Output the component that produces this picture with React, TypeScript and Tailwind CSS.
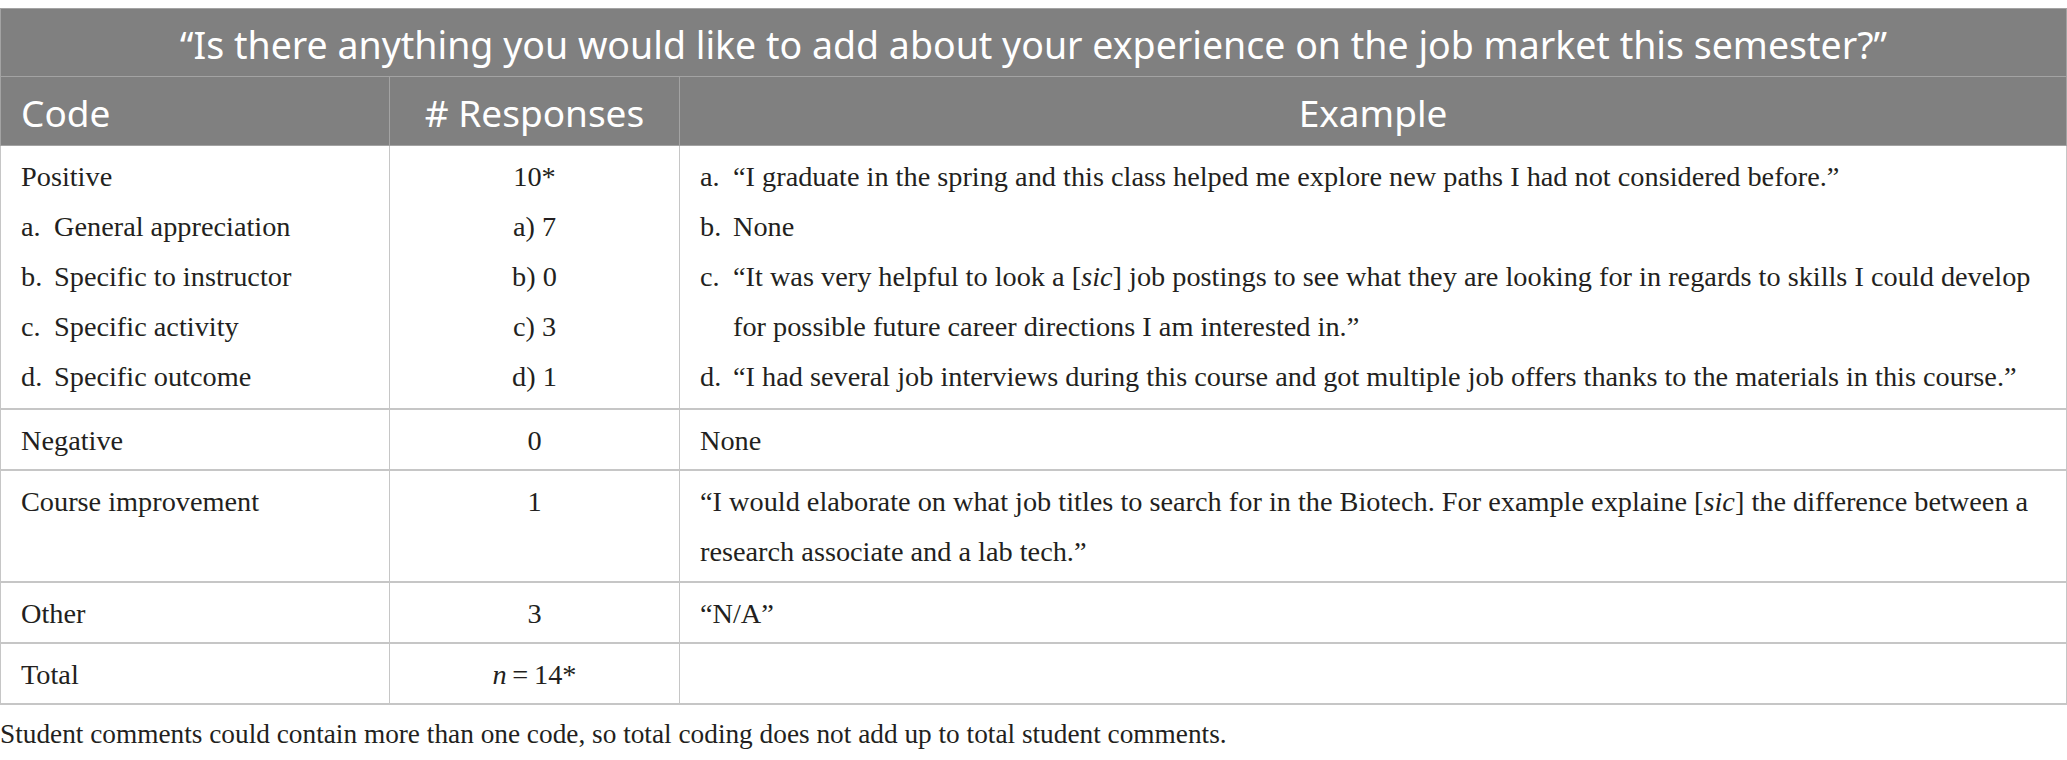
import React from 'react';

const serif = "font-['Liberation_Serif','Times_New_Roman',serif]";
const sans = "font-['Noto_Sans','Open_Sans',sans-serif]";

type Item = { label: string; text: React.ReactNode };

function ListLines({ items }: { items: Item[] }) {
  return (
    <>
      {items.map((it) => (
        <div key={it.label} className="flex">
          <span className="w-[33px] shrink-0">{it.label}</span>
          <span className="whitespace-nowrap">{it.text}</span>
        </div>
      ))}
    </>
  );
}

const Sic = () => (
  <>
    [<i>sic</i>]
  </>
);

export default function App() {
  const bodyCell = 'align-top border-x border-b-2 border-[#c6c6c6] px-[20px] pt-[6px] leading-[50px]';

  return (
    <div className={`w-[2067px] bg-white pt-[8px] text-[28.3px] text-[#231f20] ${serif}`}>
      <table className="w-full table-fixed border-collapse border border-[#bcbcbc]">
        <colgroup>
          <col className="w-[389px]" />
          <col className="w-[290px]" />
          <col />
        </colgroup>
        <thead className={`${sans} bg-[#808080] text-white font-normal`}>
          <tr className="h-[68px]">
            <th colSpan={3} className="border border-[#a3a3a3] pt-[6px] text-center text-[37.5px] font-normal">
              “Is there anything you would like to add about your experience on the job market this semester?”
            </th>
          </tr>
          <tr className="h-[69px]">
            <th className="border border-[#a3a3a3] pl-[20px] pt-[3px] text-left text-[37px] font-normal">Code</th>
            <th className="border border-[#a3a3a3] pt-[3px] text-center text-[37px] font-normal"># Responses</th>
            <th className="border border-[#a3a3a3] pt-[3px] text-center text-[37px] font-normal">Example</th>
          </tr>
        </thead>
        <tbody>
          <tr className="h-[263px]">
            <td className={bodyCell}>
              <div>Positive</div>
              <ListLines
                items={[
                  { label: 'a.', text: 'General appreciation' },
                  { label: 'b.', text: 'Specific to instructor' },
                  { label: 'c.', text: 'Specific activity' },
                  { label: 'd.', text: 'Specific outcome' },
                ]}
              />
            </td>
            <td className={`${bodyCell} text-center`}>
              <div>10*</div>
              <div>a) 7</div>
              <div>b) 0</div>
              <div>c) 3</div>
              <div>d) 1</div>
            </td>
            <td className={bodyCell}>
              <ListLines
                items={[
                  {
                    label: 'a.',
                    text: '“I graduate in the spring and this class helped me explore new paths I had not considered before.”',
                  },
                  { label: 'b.', text: 'None' },
                  {
                    label: 'c.',
                    text: (
                      <>
                        “It was very helpful to look a <Sic /> job postings to see what they are looking for in regards to skills I could develop
                        <br />
                        for possible future career directions I am interested in.”
                      </>
                    ),
                  },
                  {
                    label: 'd.',
                    text: '“I had several job interviews during this course and got multiple job offers thanks to the materials in this course.”',
                  },
                ]}
              />
            </td>
          </tr>
          <tr className="h-[61px]">
            <td className={bodyCell}>Negative</td>
            <td className={`${bodyCell} text-center`}>0</td>
            <td className={bodyCell}>None</td>
          </tr>
          <tr className="h-[112px]">
            <td className={bodyCell}>Course improvement</td>
            <td className={`${bodyCell} text-center`}>1</td>
            <td className={`${bodyCell} whitespace-nowrap`}>
              “I would elaborate on what job titles to search for in the Biotech. For example explaine <Sic /> the difference between a
              <br />
              research associate and a lab tech.”
            </td>
          </tr>
          <tr className="h-[61px]">
            <td className={bodyCell}>Other</td>
            <td className={`${bodyCell} text-center`}>3</td>
            <td className={bodyCell}>“N/A”</td>
          </tr>
          <tr className="h-[61px]">
            <td className={bodyCell}>Total</td>
            <td className={`${bodyCell} text-center`}>
              <i>n</i>
              {'\u2009=\u2009'}14*
            </td>
            <td className={bodyCell}></td>
          </tr>
        </tbody>
      </table>
      <p className="mt-[9px] text-[27.3px] leading-[40px]">
        Student comments could contain more than one code, so total coding does not add up to total student comments.
      </p>
    </div>
  );
}
